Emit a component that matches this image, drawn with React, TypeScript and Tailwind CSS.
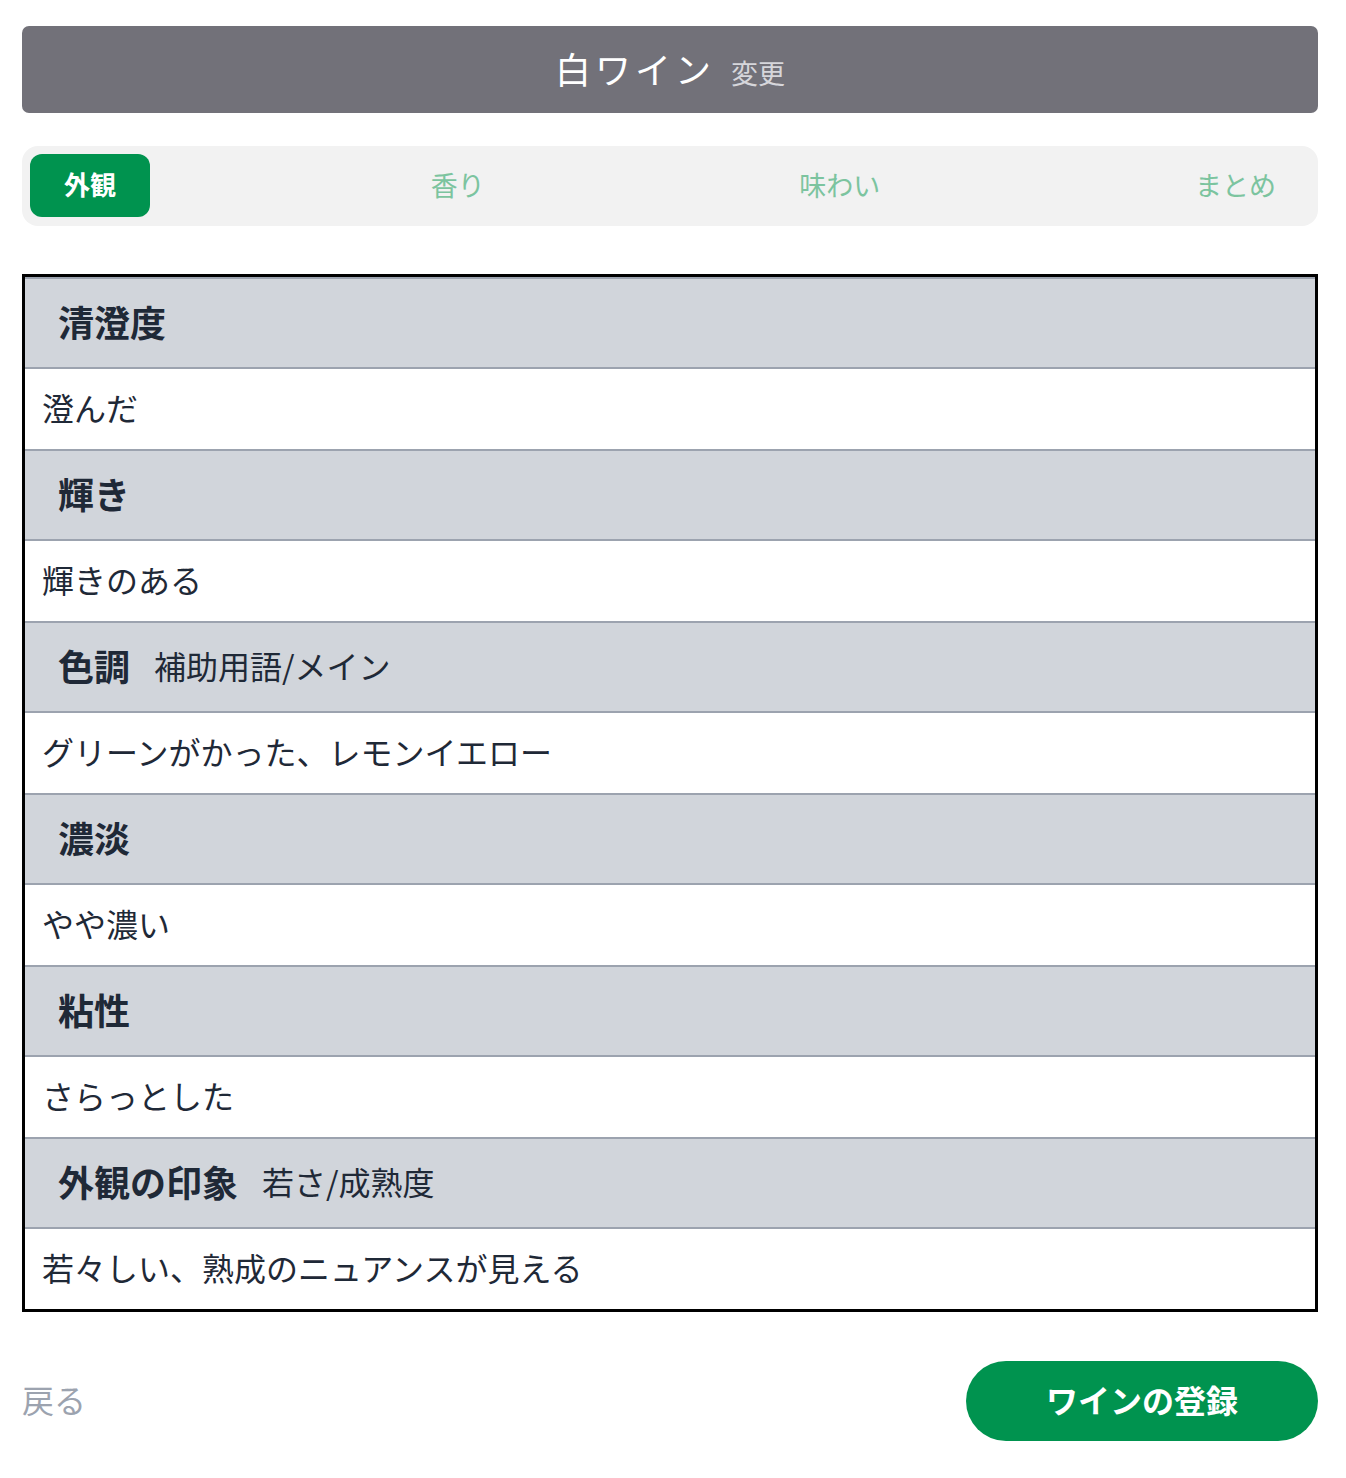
import React from "react";

const rows: { title: string; sub?: string; value: string }[] = [
  { title: "清澄度", value: "澄んだ" },
  { title: "輝き", value: "輝きのある" },
  { title: "色調", sub: "補助用語/メイン", value: "グリーンがかった、レモンイエロー" },
  { title: "濃淡", value: "やや濃い" },
  { title: "粘性", value: "さらっとした" },
  { title: "外観の印象", sub: "若さ/成熟度", value: "若々しい、熟成のニュアンスが見える" },
];

export default function App() {
  return (
    <div
      className="w-[1346px] min-h-[1478px] bg-white pl-[22px] pr-[28px] pt-[26px] pb-[36px]"
      style={{ fontFamily: '"Noto Sans CJK JP", "Noto Sans", sans-serif' }}
    >
      <div className="h-[87px] rounded-[7px] bg-[#727179] flex items-center justify-center pt-[4px]">
        <div
          className="flex items-baseline"
          style={{ fontFamily: '"Liberation Serif", "Noto Sans CJK JP", serif' }}
        >
          <span className="text-[36px] leading-none text-white tracking-[4px] font-normal">白ワイン</span>
          <span className="ml-[16px] text-[27px] leading-none text-[#d6d6db] font-normal">変更</span>
        </div>
      </div>

      <div className="mt-[33px] h-[80px] rounded-[16px] bg-[#f2f2f2] p-[8px] flex items-stretch justify-between">
        <div className="h-[63px] px-[34px] pb-[3px] rounded-[12px] bg-[#00934f] flex items-center text-white text-[26px] font-bold leading-none">
          外観
        </div>
        <div className="px-[34px] pb-[3px] flex items-center text-[#7cc49f] text-[27px] leading-none">香り</div>
        <div className="px-[34px] pb-[3px] flex items-center text-[#7cc49f] text-[27px] leading-none">味わい</div>
        <div className="px-[34px] pb-[3px] flex items-center text-[#7cc49f] text-[27px] leading-none">まとめ</div>
      </div>

      <div className="mt-[48px] border-[3px] border-black flex flex-col">
        {rows.map((r) => (
          <React.Fragment key={r.title}>
            <div className="h-[90px] border-t-2 border-[#9ca3af] bg-[#d1d5db] flex items-center pl-[33px] pb-[4px] text-[#1f2937]">
              <span className="text-[36px] font-bold leading-none">{r.title}</span>
              {r.sub && <span className="ml-[24px] text-[32px] leading-none">{r.sub}</span>}
            </div>
            <div className="h-[82px] border-t-2 border-[#9ca3af] bg-white flex items-center pl-[17px] pb-[4px] text-[#1f2937] text-[32px] leading-none">
              {r.value}
            </div>
          </React.Fragment>
        ))}
      </div>

      <div className="mt-[49px] flex items-center justify-between">
        <span className="text-[32px] leading-none text-[#9ca3af] pb-[4px]">戻る</span>
        <button className="w-[352px] h-[80px] rounded-full bg-[#00934f] text-white text-[32px] font-bold leading-none flex items-center justify-center pb-[4px]">
          ワインの登録
        </button>
      </div>
    </div>
  );
}
